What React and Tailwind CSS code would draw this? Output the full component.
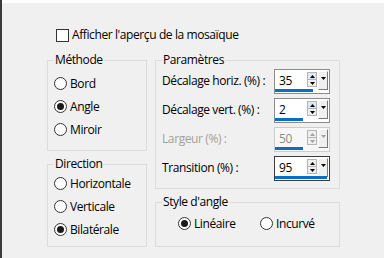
import React from 'react'

const font = { fontFamily: '"Open Sans", "Noto Sans", sans-serif' }

const Radio = ({ checked, label }) => (
  <div className="flex items-center h-[23px]">
    <div className="w-[13px] h-[13px] rounded-full border border-[#333333] bg-white flex items-center justify-center">
      {checked && <div className="w-[7px] h-[7px] rounded-full bg-[#1a1a1a]"></div>}
    </div>
    <span className="ml-[3px] text-[12px] leading-[16px] text-black">{label}</span>
  </div>
)

const Group = ({ title, className, children }) => (
  <fieldset className={`border border-[#dcdcdc] px-[6px] ${className}`}>
    <legend className="px-[1px] text-[12px] leading-[16px] text-black">{title}</legend>
    {children}
  </fieldset>
)

const Arrow = ({ up, color }) => (
  <svg width="5" height="3" viewBox="0 0 5 3" className="block">
    <polygon points={up ? '0,3 5,3 2.5,0' : '0,0 5,0 2.5,3'} fill={color} />
  </svg>
)

const Spinner = ({ value, bar, disabled, focused }) => {
  const border = disabled ? 'border-[#cccccc]' : focused ? 'border-[#3c3c3c]' : 'border-[#8c8c8c]'
  const arrow = disabled ? '#a0a0a0' : '#000000'
  return (
    <div className={`w-[56px] h-[25px] border ${border} ${disabled ? 'bg-[#f7f7f7]' : 'bg-white'} flex flex-col`}>
      <div className="flex h-[19px]">
        <span className={`pl-[4px] pt-[3px] text-[12px] leading-[16px] ${disabled ? 'text-[#8a8a8a]' : 'text-black'}`}>{value}</span>
        <div className="ml-auto mt-[2px] w-[10px] h-[15px] border border-[#b4b4b4] flex flex-col">
          <div className={`flex-1 flex items-center justify-center border-b border-[#b4b4b4] ${!disabled && !focused ? 'bg-[#dbeaf7]' : 'bg-[#f0f0f0]'}`}>
            <Arrow up color={arrow} />
          </div>
          <div className="flex-1 flex items-center justify-center bg-[#f0f0f0]">
            <Arrow color={arrow} />
          </div>
        </div>
        <div className="ml-[1px] mr-[1px] mt-[1px] w-[10px] h-[19px] bg-[#f0f0f0] border-t border-l border-t-white border-l-white border-r border-b border-r-[#7a7a7a] border-b-[#7a7a7a] flex justify-center pt-[5px]">
          <Arrow color={arrow} />
        </div>
      </div>
      <div className="mt-auto mb-[1px] h-[3px] bg-[#0a6fc2]" style={{ width: bar }}></div>
    </div>
  )
}

const Row = ({ label, disabled, ...rest }) => (
  <div className="flex items-center justify-between h-[25px]">
    <span className={`text-[12px] leading-[16px] -mt-[2px] ${disabled ? 'text-[#a0a0a0]' : 'text-black'}`}>{label}</span>
    <Spinner disabled={disabled} {...rest} />
  </div>
)

export default function App() {
  return (
    <div className="w-[384px] h-[258px] bg-[#f0f0f0] flex overflow-hidden tracking-[-0.4px]" style={font}>
      <div className="w-[2px] bg-[#3a3a3a]"></div>
      <div className="flex-1 flex flex-col">
        <div className="h-[3px] bg-white"></div>
        <div className="pl-[45px] pt-[24px]">
          <div className="flex items-center h-[16px] ml-[9px]">
            <div className="w-[13px] h-[13px] border border-[#333333] bg-white"></div>
            <span className="ml-[3px] text-[12px] leading-[16px] text-black">Afficher l'aperçu de la mosaïque</span>
          </div>
          <div className="flex gap-[8px] mt-[9px]">
            <div className="w-[100px] flex flex-col gap-[5px]">
              <Group title="Méthode" className="h-[99px] pt-[4px]">
                <Radio label="Bord" />
                <Radio label="Angle" checked />
                <Radio label="Miroir" />
              </Group>
              <Group title="Direction" className="h-[91px]">
                <Radio label="Horizontale" />
                <Radio label="Verticale" />
                <Radio label="Bilatérale" checked />
              </Group>
            </div>
            <div className="w-[185px] flex flex-col gap-[5px]">
              <Group title="Paramètres" className="h-[137px] pt-[1px] pr-[9px]">
                <div className="flex flex-col gap-[4px]">
                  <Row label="Décalage horiz. (%) :" value="35" bar={38} />
                  <Row label="Décalage vert. (%) :" value="2" bar={28} />
                  <Row label="Largeur (%) :" value="50" bar={28} disabled />
                  <Row label="Transition (%) :" value="95" bar={52} focused />
                </div>
              </Group>
              <Group title="Style d'angle" className="h-[53px] pt-[2px]">
                <div className="flex pl-[16px]">
                  <div className="w-[82px]">
                    <Radio label="Linéaire" checked />
                  </div>
                  <Radio label="Incurvé" />
                </div>
              </Group>
            </div>
          </div>
        </div>
      </div>
    </div>
  )
}
